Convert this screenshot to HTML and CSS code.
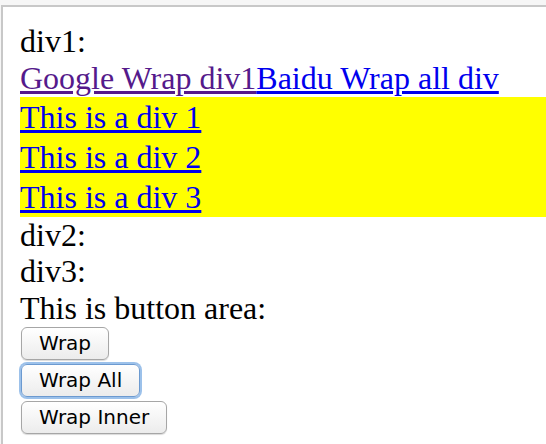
FILE: index.html
```html
<!DOCTYPE html>
<html lang="en">
<head>
  <meta charset="UTF-8" />
  <title>Wrap demo</title>
  <link rel="stylesheet" href="styles.css">
</head>
<body>
  <div class="frame">
    <div class="block">div1:</div>
    <div class="block">
      <a href="#" class="visited">Google Wrap div1</a><a href="#">Baidu Wrap all div</a>
    </div>
    <div class="yellow"><a href="#">This is a div 1</a></div>
    <div class="yellow"><a href="#">This is a div 2</a></div>
    <div class="yellow"><a href="#">This is a div 3</a></div>
    <div class="block">div2:</div>
    <div class="block">div3:</div>
    <div class="block">This is button area:</div>
    <div class="buttons">
      <button class="btn">Wrap</button>
      <button class="btn focused">Wrap All</button>
      <button class="btn">Wrap Inner</button>
    </div>
  </div>
</body>
</html>
```
FILE: styles.css
```css
html, body {
  height: 100%;
}

body {
  margin: 0;
  padding: 5px 0 0 1px;
  box-sizing: border-box;
  background: #f6f6f6;
  overflow: hidden;
}

.frame {
  height: 100%;
  box-sizing: border-box;
  background: #fff;
  border-top: 2px solid #c8c8c8;
  border-left: 2px solid #c8c8c8;
  padding: 16px 0 0 17px;
  font-family: "Liberation Serif", "Times New Roman", serif;
  font-size: 32px;
  line-height: 36.8px;
  color: #000;
}

a {
  color: #0000ee;
}

a.visited {
  color: #551a8b;
}

.yellow {
  background: #ffff00;
  line-height: 40px;
}

.buttons {
  display: flex;
  flex-direction: column;
  align-items: flex-start;
  gap: 4px;
  padding-left: 1px;
}

.btn {
  height: 33px;
  padding: 0 17px;
  font-family: "DejaVu Sans", "Lucida Grande", sans-serif;
  font-size: 20px;
  color: #000;
  background: linear-gradient(#ffffff, #ececec);
  border: 1px solid #a6a6a6;
  border-radius: 6px;
  box-shadow: 0 1px 1px rgba(0, 0, 0, 0.15);
}

.btn.focused {
  border-color: #6c9ad0;
  box-shadow: 0 0 0 2px #9cc1ea;
}
```
